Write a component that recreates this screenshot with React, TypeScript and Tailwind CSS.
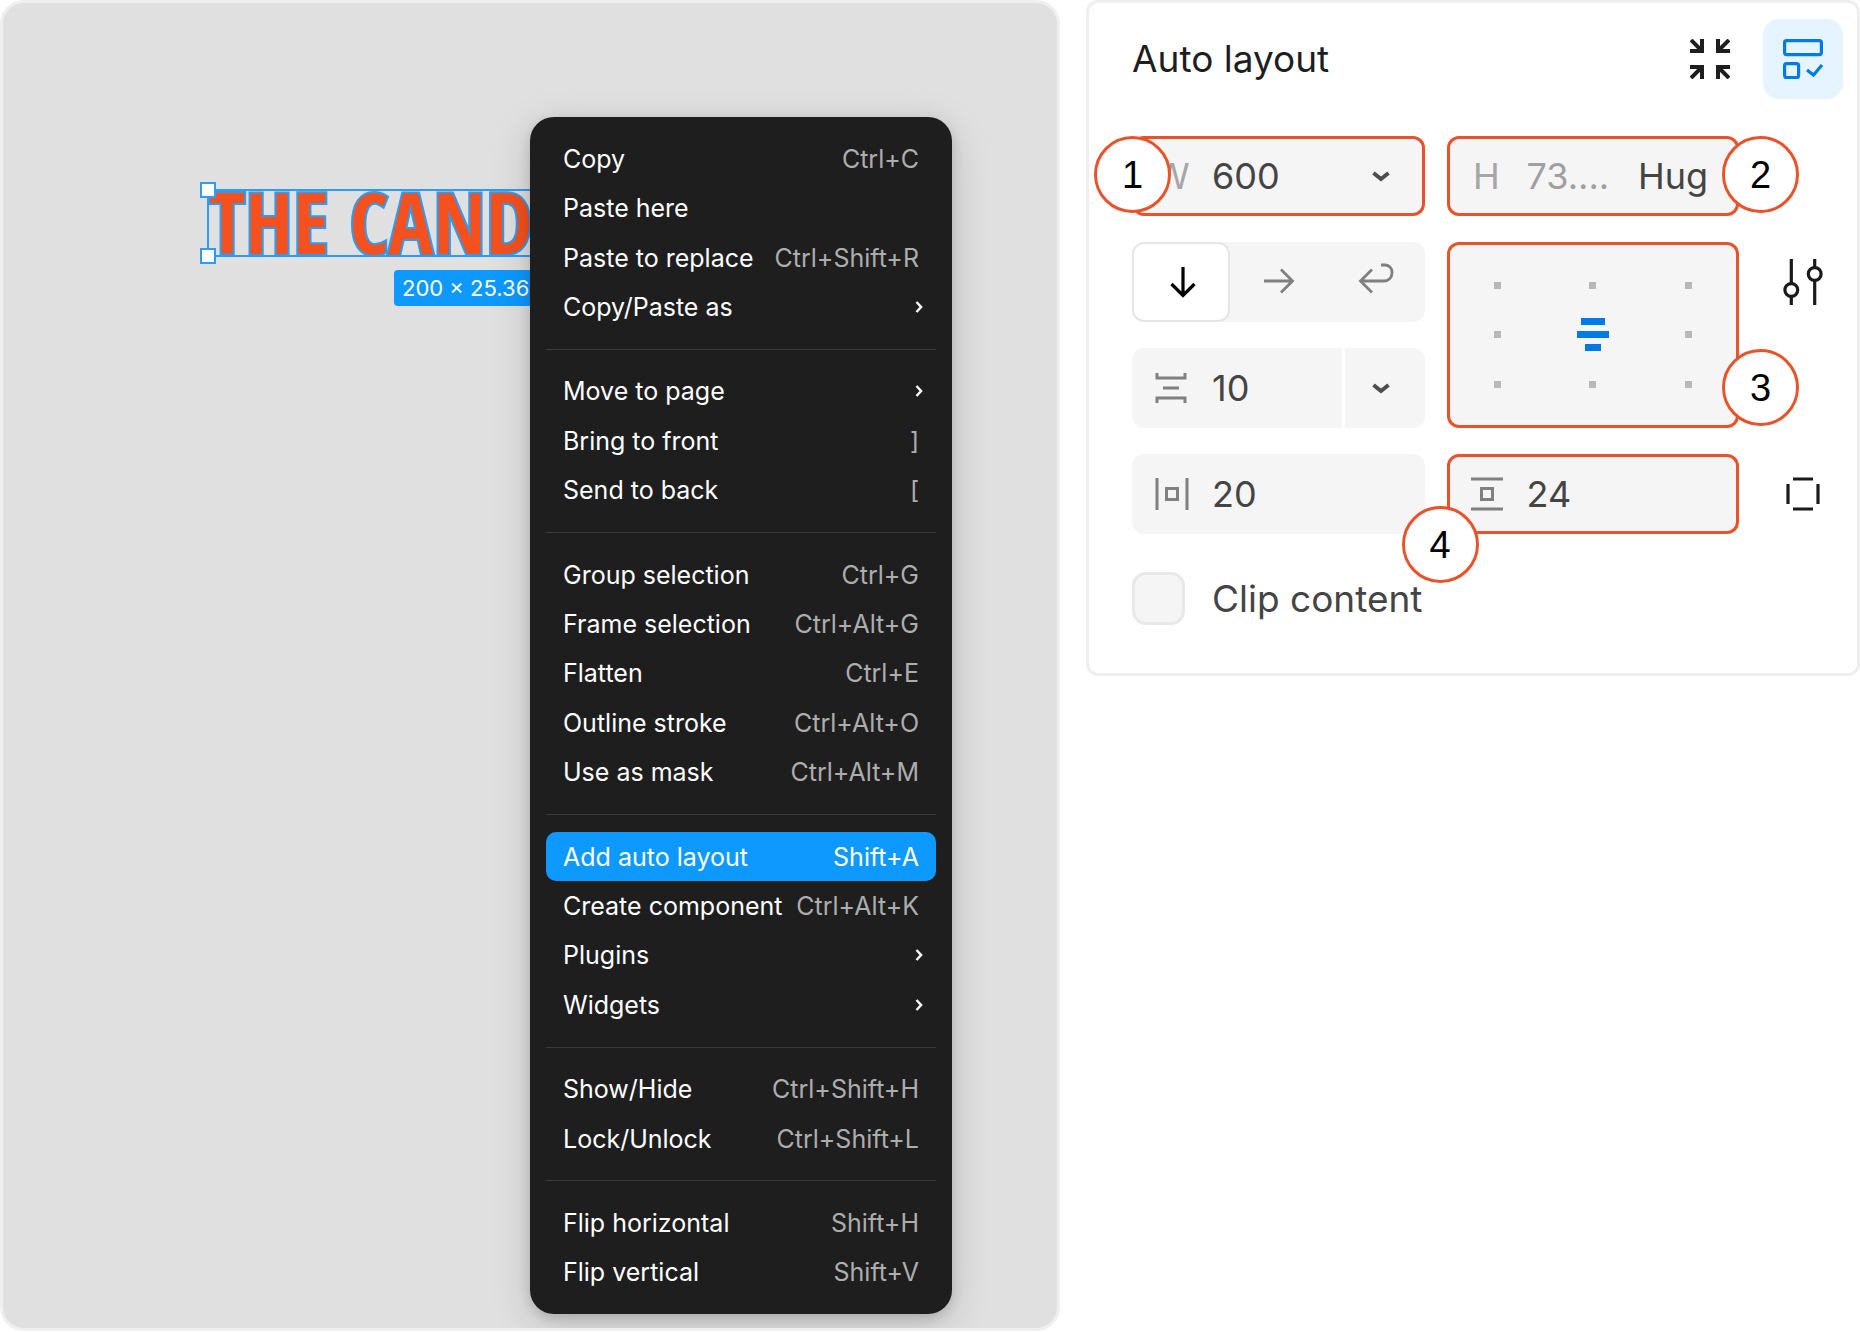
import { useState } from "react"
import type { ReactNode } from "react"

type MenuItem = { label: string; shortcut?: string; submenu?: boolean }

const MENU: MenuItem[][] = [
  [
    { label: "Copy", shortcut: "Ctrl+C" },
    { label: "Paste here" },
    { label: "Paste to replace", shortcut: "Ctrl+Shift+R" },
    { label: "Copy/Paste as", submenu: true },
  ],
  [
    { label: "Move to page", submenu: true },
    { label: "Bring to front", shortcut: "]" },
    { label: "Send to back", shortcut: "[" },
  ],
  [
    { label: "Group selection", shortcut: "Ctrl+G" },
    { label: "Frame selection", shortcut: "Ctrl+Alt+G" },
    { label: "Flatten", shortcut: "Ctrl+E" },
    { label: "Outline stroke", shortcut: "Ctrl+Alt+O" },
    { label: "Use as mask", shortcut: "Ctrl+Alt+M" },
  ],
  [
    { label: "Add auto layout", shortcut: "Shift+A" },
    { label: "Create component", shortcut: "Ctrl+Alt+K" },
    { label: "Plugins", submenu: true },
    { label: "Widgets", submenu: true },
  ],
  [
    { label: "Show/Hide", shortcut: "Ctrl+Shift+H" },
    { label: "Lock/Unlock", shortcut: "Ctrl+Shift+L" },
  ],
  [
    { label: "Flip horizontal", shortcut: "Shift+H" },
    { label: "Flip vertical", shortcut: "Shift+V" },
  ],
]

const ContextMenu = () => {
  const [active, setActive] = useState("Add auto layout")

  return (
    <div
      role="menu"
      className="absolute left-1/2 top-[114px] bottom-[14px] w-[422px] flex flex-col rounded-3xl bg-[#1e1e1e] px-4 py-[17px] shadow-[0_10px_40px_rgba(0,0,0,0.16),0_4px_12px_rgba(0,0,0,0.14)]"
    >
      {MENU.map((group, i) => (
        <div key={i} className="contents">
          {i > 0 && <div className="my-[17px] h-px shrink-0 bg-[#3a3a3a]" />}
          {group.map((item) => {
            const isActive = item.label === active
            return (
              <button
                key={item.label}
                role="menuitem"
                onMouseEnter={() => setActive(item.label)}
                className={`flex flex-1 items-center justify-between whitespace-nowrap rounded-[10px] pl-[17px] pr-[10px] text-[25px] leading-7 text-white ${
                  isActive ? "bg-[#0d99ff]" : ""
                }`}
              >
                <span>{item.label}</span>
                {item.shortcut && (
                  <span className={`pr-[7px] ${isActive ? "text-white" : "text-[#adadad]"}`}>{item.shortcut}</span>
                )}
                {item.submenu && (
                  <svg width="16" height="16" viewBox="0 0 16 16" fill="none" stroke="currentColor" strokeWidth="2.4">
                    <path d="M6.5 3l4.6 5-4.6 5" />
                  </svg>
                )}
              </button>
            )
          })}
        </div>
      ))}
    </div>
  )
}

const Canvas = () => (
  <section className="relative overflow-hidden rounded-3xl border-[3px] border-[#efefef] bg-[#e0e0e0]">
    {/* Selected layer */}
    <div className="absolute left-[204px] top-[186px] h-[68px] w-[520px] border-2 border-[#2b9df4]">
      <span className="block whitespace-nowrap font-['Open_Sans_Condensed','Open_Sans',sans-serif] text-[84px] leading-[62px] font-bold text-[#f4511e] [-webkit-text-stroke:4px_#2b9df4] [paint-order:stroke_fill]">
        THE CAND
      </span>
      <span className="absolute -left-[9px] -top-[9px] h-4 w-4 border-2 border-[#2b9df4] bg-white" />
      <span className="absolute -left-[9px] -bottom-[9px] h-4 w-4 border-2 border-[#2b9df4] bg-white" />
    </div>
    <div className="absolute left-[391px] top-[267px] rounded-[4px] bg-[#0d99ff] px-2 py-1 text-[22px] leading-7 text-white">
      200 × 25.36
    </div>
    <ContextMenu />
  </section>
)

const Badge = ({ n, className }: { n: number; className: string }) => (
  <span
    className={`absolute z-10 flex h-[77px] w-[77px] items-center justify-center rounded-full border-[3px] border-[#e8532b] bg-white font-['Liberation_Sans',Arial,sans-serif] text-[38px] leading-none text-black ${className}`}
  >
    {n}
  </span>
)

const Chevron = () => (
  <svg width="20" height="12" viewBox="0 0 20 12" fill="none" stroke="#4d4d4d" strokeWidth="4">
    <path d="M2.5 3l7.5 6 7.5-6" />
  </svg>
)

const Field = ({ marked, children }: { marked?: boolean; children: ReactNode }) => (
  <div
    className={`relative flex h-20 items-center rounded-xl bg-[#f5f5f5] ${
      marked ? "ring-[3px] ring-inset ring-[#e8532b]" : ""
    }`}
  >
    {children}
  </div>
)

const Slot = ({ children }: { children: ReactNode }) => (
  <span className="flex w-20 shrink-0 items-center justify-center text-[#a6a6a6]">{children}</span>
)

const ALIGN_CELLS = Array.from({ length: 9 }, (_, i) => i)

const AutoLayoutPanel = () => {
  const [direction, setDirection] = useState("vertical")
  const input = "w-full min-w-0 flex-1 bg-transparent outline-none"
  const seg = "flex flex-1 items-center justify-center rounded-xl border-2"
  const on = "border-[#e6e6e6] bg-white text-black"
  const off = "border-transparent text-[#808080]"

  return (
    <section className="rounded-xl border-[3px] border-[#efefef] bg-white pt-4 pr-3 pb-12 pl-[43px] text-[36px] leading-[44px] text-[#444]">
      <header className="flex items-center pr-0.5">
        <h2 className="flex-1 text-[37px] text-[#1e1e1e]">Auto layout</h2>
        <button aria-label="Collapse" className="flex h-20 w-[106px] items-center justify-center text-[#1e1e1e]">
          <svg width="40" height="40" viewBox="0 0 40 40" fill="none" stroke="currentColor" strokeWidth="4">
            <path d="M1 1l11 11M12 0v12H0" />
            <path d="M39 1L28 12M28 0v12H40" />
            <path d="M1 39l11-11M12 40V28H0" />
            <path d="M39 39L28 28M28 40V28H40" />
          </svg>
        </button>
        <button
          aria-label="Auto layout settings"
          className="flex h-20 w-20 items-center justify-center rounded-2xl bg-[#e5f4ff]"
        >
          <svg width="40" height="40" viewBox="0 0 40 40" fill="none" stroke="#007be5" strokeWidth="3.2">
            <rect x="1.6" y="1.6" width="36.8" height="14" rx="2" />
            <rect x="1.6" y="24.6" width="14" height="14" rx="2" />
            <path d="M24 31l6.5 5L39 26" />
          </svg>
        </button>
      </header>

      <div className="mt-[37px] grid grid-cols-[1fr_1fr_84px] gap-x-[22px] gap-y-[26px]">
        <Field marked>
          <Badge n={1} className="-left-[38px] top-0" />
          <label htmlFor="w">
            <Slot>W</Slot>
          </label>
          <input id="w" defaultValue="600" className={input} />
          <button aria-label="Width mode" className="flex h-20 w-[88px] items-center justify-center">
            <Chevron />
          </button>
        </Field>
        <Field marked>
          <Badge n={2} className="-right-[60px] top-0" />
          <label htmlFor="h">
            <Slot>H</Slot>
          </label>
          <input id="h" defaultValue="73...." className={`${input} text-[#a0a0a0]`} />
          <button className="pr-[31px]">Hug</button>
        </Field>
        <span />

        <div className="flex h-20 rounded-xl bg-[#f5f5f5]">
          <button
            aria-label="Vertical"
            onClick={() => setDirection("vertical")}
            className={`${seg} ${direction === "vertical" ? on : off}`}
          >
            <svg width="40" height="40" viewBox="0 0 40 40" fill="none" stroke="currentColor" strokeWidth="3.2">
              <path d="M22 5v28M10.5 22L22 33.5 33.5 22" />
            </svg>
          </button>
          <button
            aria-label="Horizontal"
            onClick={() => setDirection("horizontal")}
            className={`${seg} ${direction === "horizontal" ? on : off}`}
          >
            <svg width="40" height="40" viewBox="0 0 40 40" fill="none" stroke="currentColor" strokeWidth="2.8">
              <path d="M6 19h28M23 7.5L34.5 19 23 30.5" />
            </svg>
          </button>
          <button
            aria-label="Wrap"
            onClick={() => setDirection("wrap")}
            className={`${seg} ${direction === "wrap" ? on : off}`}
          >
            <svg width="40" height="40" viewBox="0 0 40 40" fill="none" stroke="currentColor" strokeWidth="2.8">
              <path d="M5 19h23a8 8 0 0 0 8-8v-1a7 7 0 0 0-7-7h-4M16 7.5L4.5 19 16 30.5" />
            </svg>
          </button>
        </div>

        <div className="relative row-span-2 rounded-xl bg-[#f5f5f5] ring-[3px] ring-inset ring-[#e8532b]">
          <Badge n={3} className="-right-[60px] bottom-0.5" />
          <div className="grid h-full grid-cols-3 grid-rows-3 px-[3px] py-[19px]">
            {ALIGN_CELLS.map((i) => (
              <button key={i} aria-label={`Align ${i + 1}`} className="flex items-center justify-center">
                {i === 4 ? (
                  <span className="flex flex-col items-center gap-[6px]">
                    <span className="h-[7px] w-6 bg-[#007be5]" />
                    <span className="h-[7px] w-8 bg-[#007be5]" />
                    <span className="h-[7px] w-4 bg-[#007be5]" />
                  </span>
                ) : (
                  <span className="h-[7px] w-[7px] bg-[#b8b8b8]" />
                )}
              </button>
            ))}
          </div>
        </div>
        <button aria-label="Advanced settings" className="flex h-20 items-center justify-center">
          <svg width="40" height="46" viewBox="0 0 40 46" fill="none" stroke="#1a1a1a" strokeWidth="3.2">
            <circle cx="8.3" cy="31" r="6.4" />
            <path d="M8.3 0v24.6M8.3 37.4V46" />
            <circle cx="31.7" cy="15" r="6.4" />
            <path d="M31.7 0v8.6M31.7 21.4V46" />
          </svg>
        </button>

        <div className="flex h-20 gap-[3px] overflow-hidden rounded-xl">
          <label className="flex flex-1 items-center bg-[#f5f5f5]">
            <Slot>
              <svg width="34" height="34" viewBox="0 0 34 34" fill="none" stroke="#808080" strokeWidth="3">
                <path d="M2 2v5h28V2M8 17h16M2 32v-5h28v5" />
              </svg>
            </Slot>
            <input aria-label="Gap" defaultValue="10" className={input} />
          </label>
          <button aria-label="Gap mode" className="flex w-20 items-center justify-center bg-[#f5f5f5] pr-2">
            <Chevron />
          </button>
        </div>
        <span />

        <Field>
          <Slot>
            <svg width="34" height="34" viewBox="0 0 34 34" fill="none" stroke="#808080" strokeWidth="3">
              <path d="M2 1v32M32 1v32" />
              <rect x="11.5" y="11.5" width="11" height="11" />
            </svg>
          </Slot>
          <input aria-label="Horizontal padding" defaultValue="20" className={input} />
        </Field>
        <Field marked>
          <Badge n={4} className="-left-[45px] top-[52px]" />
          <Slot>
            <svg width="34" height="34" viewBox="0 0 34 34" fill="none" stroke="#808080" strokeWidth="3">
              <path d="M1 2h32M1 32h32" />
              <rect x="11.5" y="11.5" width="11" height="11" />
            </svg>
          </Slot>
          <input aria-label="Vertical padding" defaultValue="24" className={input} />
        </Field>
        <button aria-label="Individual padding" className="flex h-20 items-center justify-center">
          <svg width="34" height="34" viewBox="0 0 34 34" fill="none" stroke="#1a1a1a" strokeWidth="3.2">
            <path d="M7 2h20M7 32h20M2 7v20M32 7v20" />
          </svg>
        </button>
      </div>

      <label className="mt-[38px] flex items-center gap-[27px] text-[37px]">
        <input
          type="checkbox"
          className="h-[53px] w-[53px] appearance-none rounded-[14px] border-[3px] border-[#e8e8e8] bg-[#f5f5f5]"
        />
        Clip content
      </label>
    </section>
  )
}

export default function App() {
  return (
    <main className="min-h-screen bg-white pb-px font-['Inter',sans-serif] grid grid-cols-[1060fr_774fr] gap-[26px]">
      <Canvas />
      <div>
        <AutoLayoutPanel />
      </div>
    </main>
  )
}
